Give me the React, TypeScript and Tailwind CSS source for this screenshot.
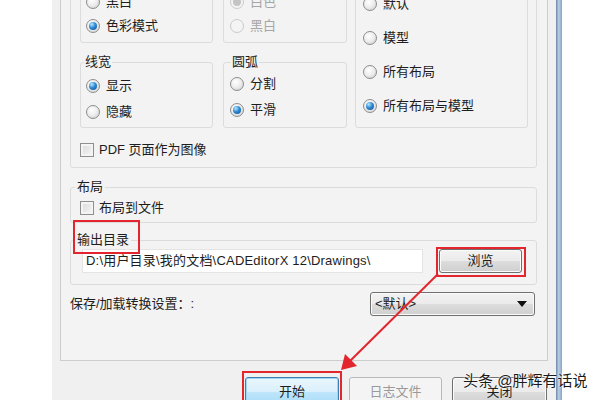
import clsx from 'clsx';

function Radio({ label, checked, disabled }: { label: string; checked?: boolean; disabled?: boolean }) {
  return (
    <div className="flex h-6 items-center gap-[6px]">
      <span
        className={clsx(
          'flex h-[14px] w-[14px] shrink-0 items-center justify-center rounded-full border',
          disabled
            ? 'border-[#cacaca] bg-[#f4f4f4]'
            : 'border-[#8d8d8d] bg-[radial-gradient(circle_at_40%_35%,#ffffff,#ececec_50%,#c8c8c8)]'
        )}
      >
        {checked && (
          <span
            className={clsx(
              'h-[8px] w-[8px] rounded-full',
              disabled
                ? 'bg-[#c4c4c4]'
                : 'bg-[radial-gradient(circle_at_35%_30%,#b8e8ff,#2f8ad4_45%,#0c4f92)]'
            )}
          />
        )}
      </span>
      <span className={disabled ? 'text-[#a6a6a6]' : 'text-[#1d1d1d]'}>{label}</span>
    </div>
  );
}

function Checkbox({ label }: { label: string }) {
  return (
    <div className="flex h-4 items-center gap-[5px]">
      <span className="h-[14px] w-[14px] shrink-0 border border-[#8e8f8f] bg-[linear-gradient(135deg,#d9d9d9,#f7f7f7)] shadow-[inset_0_0_0_2px_#f4f4f4]" />
      <span className="text-[#1d1d1d]">{label}</span>
    </div>
  );
}

const face =
  'rounded-[3px] border border-[#707070] bg-[linear-gradient(#f2f2f2,#ebebeb_50%,#dddddd_50%,#cfcfcf)] shadow-[inset_0_0_0_1px_#fbfbfb] text-[#1d1d1d]';

export default function App() {
  return (
    <div className="relative flex h-[400px] w-[600px] overflow-hidden bg-white font-['Liberation_Sans','Noto_Sans_CJK_SC',sans-serif] text-[13px] leading-4">
      {/* dialog window */}
      <div className="ml-[52px] flex w-[504px] shrink-0 flex-col bg-[#f0f0f0]">
        <div className="ml-[8px] mt-[-60px] flex h-[421px] w-[488px] shrink-0 flex-col border border-[#cdcdcd] bg-[#f3f3f3] pl-[9px]">
          {/* export options */}
          <div className="mt-[4px] flex w-[467px] flex-col rounded-[3px] border border-[#dcdcdc] pb-[9px] pl-[9px] pt-[4px]">
            <div className="flex">
              <div className="flex w-[133px] flex-col">
                <div className="flex h-[93px] flex-col justify-end rounded-[3px] border border-[#dcdcdc] pb-[4px] pl-[5px]">
                  <Radio label="黑白" />
                  <Radio label="色彩模式" checked />
                </div>
                <fieldset className="mt-[11px] rounded-[3px] border border-[#dcdcdc]">
                  <legend className="ml-[3px] px-[1px] text-[#1d1d1d]">线宽</legend>
                  <div className="flex flex-col gap-[2px] pb-[3px] pl-[5px] pt-[4px]">
                    <Radio label="显示" checked />
                    <Radio label="隐藏" />
                  </div>
                </fieldset>
              </div>
              <div className="ml-[10px] flex w-[124px] flex-col">
                <div className="flex h-[93px] flex-col justify-end rounded-[3px] border border-[#dcdcdc] pb-[4px] pl-[6px]">
                  <Radio label="白色" checked disabled />
                  <Radio label="黑白" disabled />
                </div>
                <fieldset className="mt-[11px] rounded-[3px] border border-[#dcdcdc]">
                  <legend className="ml-[7px] px-[1px] text-[#1d1d1d]">圆弧</legend>
                  <div className="flex flex-col gap-[2px] pb-[5px] pl-[6px] pt-[2px]">
                    <Radio label="分割" />
                    <Radio label="平滑" checked />
                  </div>
                </fieldset>
              </div>
              <div className="ml-[8px] flex h-[178px] w-[173px] flex-col justify-end gap-[10px] rounded-[3px] border border-[#dcdcdc] pb-[9px] pl-[7px]">
                <Radio label="默认" />
                <Radio label="模型" />
                <Radio label="所有布局" />
                <Radio label="所有布局与模型" checked />
              </div>
            </div>
            <div className="mt-[14px]">
              <Checkbox label="PDF 页面作为图像" />
            </div>
          </div>

          {/* layout */}
          <fieldset className="mt-[11px] w-[467px] rounded-[3px] border border-[#dcdcdc]">
            <legend className="ml-[4px] px-[2px] text-[#1d1d1d]">布局</legend>
            <div className="pb-[6px] pl-[9px] pt-[5px]">
              <Checkbox label="布局到文件" />
            </div>
          </fieldset>

          {/* output folder */}
          <fieldset className="mt-[9px] w-[467px] rounded-[3px] border border-[#dcdcdc]">
            <legend className="ml-[4px] px-[2px] text-[#1d1d1d]">输出目录</legend>
            <div className="flex items-center gap-[16px] pb-[11px] pl-[11px] pt-[1px]">
              <div className="flex h-6 w-[341px] items-center border border-[#e4e4e4] bg-white pl-[3px] tracking-[0.2px] text-[#1d1d1d]">
                D:\用户目录\我的文档\CADEditorX 12\Drawings\
              </div>
              <button className={clsx(face, 'flex h-6 w-[83px] items-center justify-center')}>浏览</button>
            </div>
          </fieldset>

          <div className="mt-[7px] flex h-6 w-[465px] items-center justify-between">
            <span className="text-[#1d1d1d]">保存/加载转换设置：:</span>
            <div className={clsx(face, 'flex h-6 w-[165px] items-center justify-between pl-[4px] pr-[7px]')}>
              <span>&lt;默认&gt;</span>
              <svg width="10" height="6" viewBox="0 0 10 6">
                <path d="M0 0h10L5 6z" fill="#111" />
              </svg>
            </div>
          </div>
        </div>

        <div className="ml-[193px] mt-[16px] flex gap-[10px]">
          <button className="flex h-[30px] w-[94px] items-center justify-center rounded-[3px] border border-[#3c7fb1] bg-[linear-gradient(#eaf6fd,#d9f0fc_50%,#bee6fd_50%,#a7d9f5)] text-[#1d1d1d] shadow-[inset_0_0_0_1px_#9fd6f5]">
            开始
          </button>
          <button className="flex h-[30px] w-[93px] items-center justify-center rounded-[3px] border border-[#b5b9bc] bg-[#f4f4f4] text-[#9a9a9a]">
            日志文件
          </button>
          <button className={clsx(face, 'flex h-[30px] w-[95px] items-center justify-center')}>关闭</button>
        </div>
      </div>

      {/* window frame */}
      <div className="h-full w-[6px] shrink-0 bg-[linear-gradient(to_right,#6c84a5,#b9cfe6_45%,#8aa3c2)]" />

      {/* annotations on the screenshot */}
      <div className="pointer-events-none absolute inset-0">
        <div className="absolute left-[73px] top-[220px] h-[34px] w-[67px] border-2 border-[#e3262d]" />
        <div className="absolute left-[436px] top-[247px] h-[30px] w-[90px] border-2 border-[#e3262d]" />
        <div className="absolute left-[242px] top-[371px] h-[32px] w-[100px] border-2 border-[#e3262d]" />
        <svg className="absolute left-0 top-0" width="600" height="400">
          <line x1="438" y1="274" x2="350" y2="361" stroke="#e3262d" strokeWidth="2" />
          <polygon points="341,370 357,366 345,354" fill="#e3262d" />
        </svg>
        <div className="absolute left-[463px] top-[371px] text-[15px] leading-5 text-[#1a1a1a] [text-shadow:0_0_2px_#fff,0_0_2px_#fff]">
          头条 @胖辉有话说
        </div>
      </div>
    </div>
  );
}
